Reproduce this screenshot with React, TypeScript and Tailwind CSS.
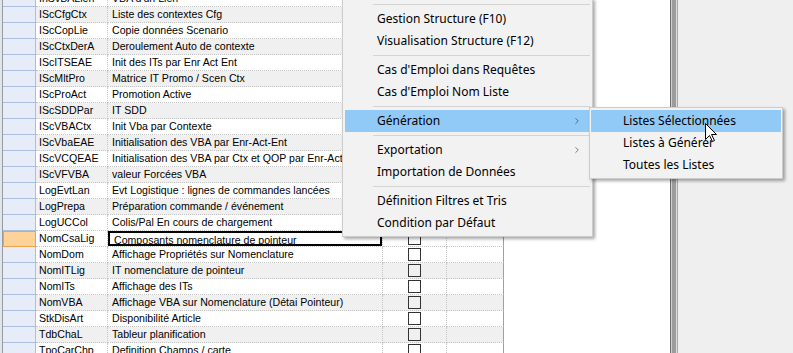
import { ChevronRight } from 'lucide-react';

const rows: [string, string][] = [
  ['IhSvBALien', "VBA d'un Lien"],
  ['IScCfgCtx', 'Liste des contextes Cfg'],
  ['IScCopLie', 'Copie données Scenario'],
  ['IScCtxDerA', 'Deroulement Auto de contexte'],
  ['IScITSEAE', 'Init des ITs par Enr Act Ent'],
  ['IScMltPro', 'Matrice IT Promo / Scen Ctx'],
  ['IScProAct', 'Promotion Active'],
  ['IScSDDPar', 'IT SDD'],
  ['IScVBACtx', 'Init Vba par Contexte'],
  ['IScVbaEAE', 'Initialisation des VBA par Enr-Act-Ent'],
  ['IScVCQEAE', 'Initialisation des VBA par Ctx et QOP par Enr-Act-Ent'],
  ['IScVFVBA', 'valeur Forcées VBA'],
  ['LogEvtLan', 'Evt Logistique : lignes de commandes lancées'],
  ['LogPrepa', 'Préparation commande / événement'],
  ['LogUCCol', 'Colis/Pal En cours de chargement'],
  ['NomCsaLig', 'Composants nomenclature de pointeur'],
  ['NomDom', 'Affichage Propriétés sur Nomenclature'],
  ['NomITLig', 'IT nomenclature de pointeur'],
  ['NomITs', 'Affichage des ITs'],
  ['NomVBA', 'Affichage VBA sur Nomenclature (Détai Pointeur)'],
  ['StkDisArt', 'Disponibilité Article'],
  ['TdbChaL', 'Tableur planification'],
  ['TpoCarChp', 'Definition Champs / carte'],
];

const SELECTED = 15;

type MenuEntry = { label?: string; sub?: boolean; active?: boolean } | 'sep';

const mainMenu: MenuEntry[] = [
  'sep',
  { label: 'Gestion Structure (F10)' },
  { label: 'Visualisation Structure (F12)' },
  'sep',
  { label: "Cas d'Emploi dans Requêtes" },
  { label: "Cas d'Emploi Nom Liste" },
  'sep',
  { label: 'Génération', sub: true, active: true },
  'sep',
  { label: 'Exportation', sub: true },
  { label: 'Importation de Données' },
  'sep',
  { label: 'Définition Filtres et Tris' },
  { label: 'Condition par Défaut' },
];

const subMenu: MenuEntry[] = [
  { label: 'Listes Sélectionnées', active: true },
  { label: 'Listes à Générer' },
  { label: 'Toutes les Listes' },
];

function GridRow({ code, label, index }: { code: string; label: string; index: number }) {
  const selected = index === SELECTED;
  const shaded = index % 2 === 1 && !selected;
  const cell = 'h-full shrink-0 border-b border-r border-dotted border-[#c6c6c6]';
  return (
    <div className={`flex h-4 ${shaded ? 'bg-[#f0f0f0]' : 'bg-white'}`}>
      <div
        className={
          selected
            ? 'h-full w-[33px] shrink-0 border border-[#f2a24e] bg-[#fdd39a]'
            : 'h-full w-[33px] shrink-0 border-b border-r border-[#a6bfe2] bg-[#e6edf8]'
        }
      />
      <div className={`${cell} w-[72px] truncate pl-[3px] leading-[15px]`}>{code}</div>
      <div className={`${cell} w-[275px]`}>
        <div
          className={`h-full overflow-hidden whitespace-nowrap pl-[4px] leading-[15px] ${
            selected ? 'border-2 border-black pl-[2px] leading-[12px]' : ''
          }`}>
          {label}
        </div>
      </div>
      <div className={`${cell} flex w-[64px] items-center justify-center`}>
        <div className="h-[13px] w-[13px] border border-[#333333]" />
      </div>
      <div className="h-full w-[57px] shrink-0 border-b border-r border-b-[#c6c6c6] border-r-[#a0a0a0] [border-bottom-style:dotted]" />
      <div className="h-full flex-1 bg-white" />
    </div>
  );
}

function MenuList({ items, indent }: { items: MenuEntry[]; indent: string }) {
  return (
    <>
      {items.map((item, i) =>
        item === 'sep' ? (
          <div key={i} className="h-[7px] pt-[3px]">
            <div className="ml-[28px] h-px bg-[#d4d4d4]" />
          </div>
        ) : (
          <div
            key={i}
            className={`flex h-[22px] items-center ${indent} pr-[8px] ${item.active ? 'bg-[#91c9f7]' : ''}`}>
            <span className="flex-1">{item.label}</span>
            {item.sub && <ChevronRight size={10} strokeWidth={1.5} className="text-[#333]" />}
          </div>
        ),
      )}
    </>
  );
}

export default function App() {
  return (
    <div className="relative flex h-[353px] w-[793px] overflow-hidden bg-[#efefef] font-['Liberation_Sans',Arial,sans-serif] text-black">
      <div className="flex h-full w-[670px] bg-white">
        <div className="h-full w-[2px] bg-[#dce5f2]" />
        <div className="h-full w-px bg-[#9a9a9a]" />
        <div className="mt-[-9px] flex-1 text-[10.6px]">
          {rows.map(([code, label], i) => (
            <GridRow key={code} code={code} label={label} index={i} />
          ))}
        </div>
      </div>
      <div className="h-full w-px bg-[#6e6e6e]" />
      <div className="h-full w-px bg-[#cfcfcf]" />
      <div className="h-full w-[4px] bg-[#9c9c9c]" />
      <div className="h-full w-px bg-[#dedede]" />
      <div className="h-full w-px bg-[#a8a8a8]" />
      <div className="h-full flex-1 bg-[#efefef]" />

      <div className="absolute left-[342px] top-[-2px] w-[251px] border border-[#cccccc] bg-[#f2f2f2] p-[2px] font-['Noto_Sans',sans-serif] text-[12px] shadow-[2px_2px_3px_rgba(0,0,0,0.35)]">
        <MenuList items={mainMenu} indent="pl-[32px]" />
      </div>

      <div className="absolute left-[589px] top-[107px] w-[194px] border border-[#cccccc] bg-[#f2f2f2] px-[1px] py-[2px] font-['Noto_Sans',sans-serif] text-[12px] shadow-[2px_2px_3px_rgba(0,0,0,0.35)]">
        <MenuList items={subMenu} indent="pl-[32px]" />
      </div>

      <svg className="absolute left-[705px] top-[123px]" width="13" height="20" viewBox="0 0 13 20">
        <path
          d="M0.5 0.5 L0.5 16.5 L4.5 12.5 L7.5 18.5 L9.5 17.5 L6.5 11.5 L11.5 11.5 Z"
          fill="white"
          stroke="black"
          strokeWidth="1"
        />
      </svg>
    </div>
  );
}
